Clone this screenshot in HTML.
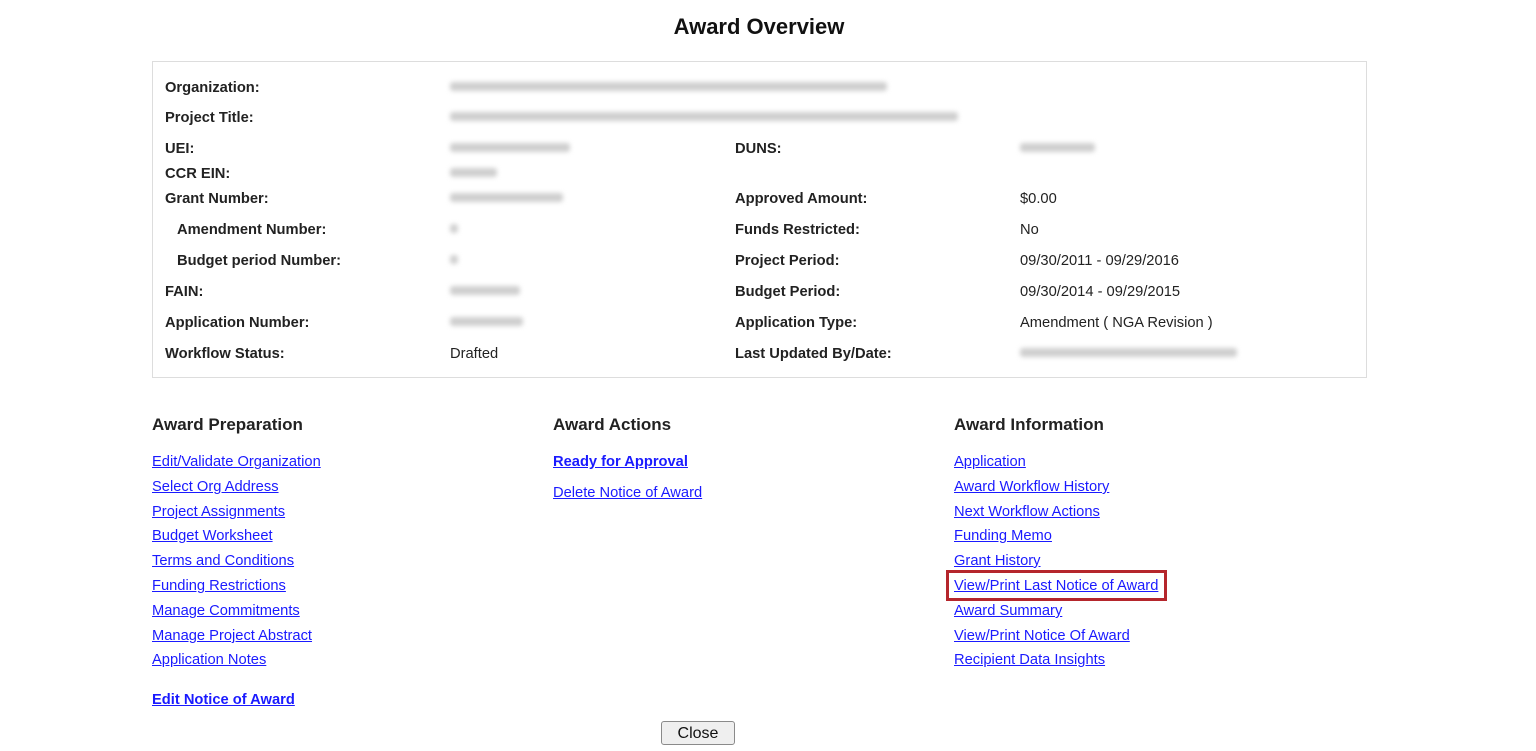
<!DOCTYPE html>
<html><head><meta charset="utf-8"><style>
body{margin:0;width:1536px;height:751px;background:#fff;font-family:"Liberation Sans",Arial,sans-serif;color:#222;position:relative;overflow:hidden}
.a{position:absolute;white-space:nowrap;font-size:14.7px;line-height:17px;margin-top:2px}
.b{font-weight:bold}
.blur{position:absolute;height:9px;background:#cfcfcf;filter:blur(2.5px);border-radius:3px;margin-top:-1px}
h1{position:absolute;left:0;width:1518px;top:14px;margin:0;text-align:center;font-size:22px;font-weight:bold;color:#111}
.box{position:absolute;left:152px;top:61px;width:1213px;height:315px;border:1px solid #ddd}
.h{position:absolute;font-size:17px;font-weight:bold;line-height:20px;color:#222;margin-top:2px}
a{color:#1a1aff;text-decoration:underline}
.red{position:absolute;left:946px;top:570px;width:221px;height:31px;border:3px solid #b5262c;box-sizing:border-box}
.btn{position:absolute;left:661px;top:721px;width:74px;height:24px;box-sizing:border-box;border:1px solid #8a8a8a;border-radius:3px;background:#efefef;font-size:16px;text-align:center;line-height:24px;color:#111}
</style></head><body>
<h1>Award Overview</h1>
<div class="box"></div>
<div class="a b" style="left:165px;top:78px">Organization:</div>
<div class="a b" style="left:165px;top:108px">Project Title:</div>
<div class="a b" style="left:165px;top:139px">UEI:</div>
<div class="a b" style="left:165px;top:164px">CCR EIN:</div>
<div class="a b" style="left:165px;top:189px">Grant Number:</div>
<div class="a b" style="left:177px;top:220px">Amendment Number:</div>
<div class="a b" style="left:177px;top:251px">Budget period Number:</div>
<div class="a b" style="left:165px;top:282px">FAIN:</div>
<div class="a b" style="left:165px;top:313px">Application Number:</div>
<div class="a b" style="left:165px;top:344px">Workflow Status:</div>
<div class="a" style="left:450px;top:344px">Drafted</div>
<div class="blur" style="left:450px;top:83px;width:437px"></div>
<div class="blur" style="left:450px;top:113px;width:508px"></div>
<div class="blur" style="left:450px;top:144px;width:120px"></div>
<div class="blur" style="left:450px;top:169px;width:47px"></div>
<div class="blur" style="left:450px;top:194px;width:113px"></div>
<div class="blur" style="left:450px;top:225px;width:8px"></div>
<div class="blur" style="left:450px;top:256px;width:8px"></div>
<div class="blur" style="left:450px;top:287px;width:70px"></div>
<div class="blur" style="left:450px;top:318px;width:73px"></div>
<div class="a b" style="left:735px;top:139px">DUNS:</div>
<div class="a b" style="left:735px;top:189px">Approved Amount:</div>
<div class="a b" style="left:735px;top:220px">Funds Restricted:</div>
<div class="a b" style="left:735px;top:251px">Project Period:</div>
<div class="a b" style="left:735px;top:282px">Budget Period:</div>
<div class="a b" style="left:735px;top:313px">Application Type:</div>
<div class="a b" style="left:735px;top:344px">Last Updated By/Date:</div>
<div class="blur" style="left:1020px;top:144px;width:75px"></div>
<div class="a" style="left:1020px;top:189px">$0.00</div>
<div class="a" style="left:1020px;top:220px">No</div>
<div class="a" style="left:1020px;top:251px">09/30/2011 - 09/29/2016</div>
<div class="a" style="left:1020px;top:282px">09/30/2014 - 09/29/2015</div>
<div class="a" style="left:1020px;top:313px">Amendment ( NGA Revision )</div>
<div class="blur" style="left:1020px;top:349px;width:217px"></div>

<div class="h" style="left:152px;top:413px">Award Preparation</div>
<div class="h" style="left:553px;top:413px">Award Actions</div>
<div class="h" style="left:954px;top:413px">Award Information</div>

<div class="a" style="left:152px;top:452px"><a>Edit/Validate Organization</a></div>
<div class="a" style="left:152px;top:477px"><a>Select Org Address</a></div>
<div class="a" style="left:152px;top:502px"><a>Project Assignments</a></div>
<div class="a" style="left:152px;top:526px"><a>Budget Worksheet</a></div>
<div class="a" style="left:152px;top:551px"><a>Terms and Conditions</a></div>
<div class="a" style="left:152px;top:576px"><a>Funding Restrictions</a></div>
<div class="a" style="left:152px;top:601px"><a>Manage Commitments</a></div>
<div class="a" style="left:152px;top:626px"><a>Manage Project Abstract</a></div>
<div class="a" style="left:152px;top:650px"><a>Application Notes</a></div>
<div class="a b" style="left:152px;top:690px"><a>Edit Notice of Award</a></div>

<div class="a b" style="left:553px;top:452px"><a>Ready for Approval</a></div>
<div class="a" style="left:553px;top:483px"><a>Delete Notice of Award</a></div>

<div class="a" style="left:954px;top:452px"><a>Application</a></div>
<div class="a" style="left:954px;top:477px"><a>Award Workflow History</a></div>
<div class="a" style="left:954px;top:502px"><a>Next Workflow Actions</a></div>
<div class="a" style="left:954px;top:526px"><a>Funding Memo</a></div>
<div class="a" style="left:954px;top:551px"><a>Grant History</a></div>
<div class="a" style="left:954px;top:576px"><a>View/Print Last Notice of Award</a></div>
<div class="a" style="left:954px;top:601px"><a>Award Summary</a></div>
<div class="a" style="left:954px;top:626px"><a>View/Print Notice Of Award</a></div>
<div class="a" style="left:954px;top:650px"><a>Recipient Data Insights</a></div>
<div class="red"></div>
<div class="btn">Close</div>
</body></html>
